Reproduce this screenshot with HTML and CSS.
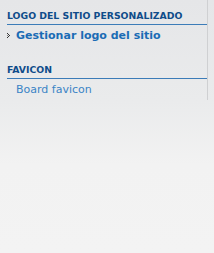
FILE: index.html
```html
<!DOCTYPE html>
<html>
<head>
<meta charset="utf-8">
<link rel="stylesheet" href="styles.css">
</head>
<body>
<div class="menu">
  <div class="block">
    <div class="head">LOGO DEL SITIO PERSONALIZADO</div>
    <ul class="items">
      <li class="item active"><svg class="bullet" width="3" height="5" viewBox="0 0 3 5"><rect x="0" y="0" width="1" height="1" fill="#333"/><rect x="1" y="1" width="1" height="1" fill="#333"/><rect x="2" y="2" width="1" height="1" fill="#333"/><rect x="1" y="3" width="1" height="1" fill="#333"/><rect x="0" y="4" width="1" height="1" fill="#333"/><rect x="0" y="2" width="1" height="1" fill="#888"/></svg><a href="#">Gestionar logo del sitio</a></li>
    </ul>
  </div>
  <div class="block">
    <div class="head">FAVICON</div>
    <ul class="items">
      <li class="item"><a href="#">Board favicon</a></li>
    </ul>
  </div>
</div>
</body>
</html>
```
FILE: styles.css
```css
html, body {
  margin: 0;
  padding: 0;
  height: 100%;
}
body {
  background: linear-gradient(to bottom, #e5e6e8 0%, #eaebec 40%, #f2f2f2 65%, #f3f3f3 100%);
  font-family: "DejaVu Sans", Verdana, sans-serif;
}
.menu {
  width: 207px;
  border-right: 1px solid #cfd0d2;
  padding-top: 10px;
  height: 90px;
  box-sizing: content-box;
}
.block {
  margin-left: 7px;
}
.head {
  font-size: 9.3px;
  font-weight: bold;
  color: #0f4c8a;
  line-height: 12px;
  border-bottom: 1px solid #3c7cb8;
  padding-bottom: 2px;
}
.items {
  list-style: none;
  margin: 0;
  padding: 0;
}
.item {
  display: flex;
  align-items: center;
  height: 20px;
  margin-bottom: 19px;
}
.item a {
  text-decoration: none;
  font-size: 11px;
  color: #3b84c6;
  margin-left: 9px;
}
.item.active a {
  font-weight: bold;
  color: #1b6cb5;
  margin-left: 6px;
}
.bullet {
  display: block;
}
```
